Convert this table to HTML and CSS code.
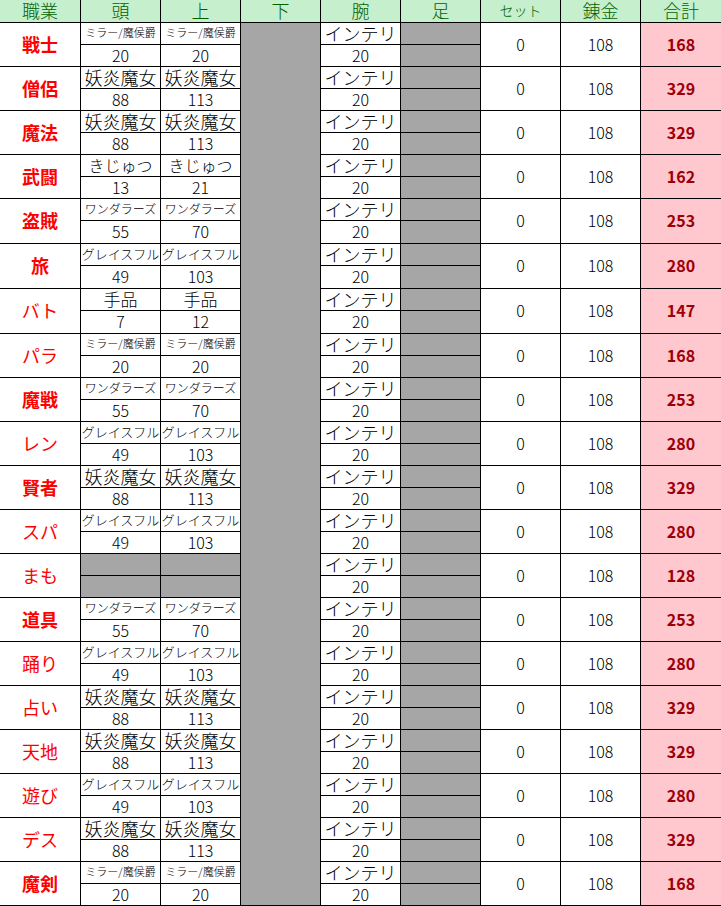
FILE: index.html
```html
<!DOCTYPE html>
<html lang="ja">
<head>
<meta charset="utf-8">
<title>職業別 装備表</title>
<link rel="stylesheet" href="styles.css">
</head>
<body>
<div class="sheet">
  <div class="hd">職業</div><div class="hd">頭</div><div class="hd">上</div><div class="hd">下</div><div class="hd">腕</div><div class="hd">足</div><div class="hd set">セット</div><div class="hd">錬金</div><div class="hd last">合計</div>
  <div class="shita"></div>

  <div class="job b">戦士</div><div class="sm">ミラー/魔侯爵</div><div class="sm">ミラー/魔侯爵</div><div>インテリ</div><div class="g"></div><div class="m">0</div><div class="m">108</div><div class="m tot">168</div>
  <div class="n">20</div><div class="n">20</div><div class="n">20</div><div class="g"></div>

  <div class="job b">僧侶</div><div>妖炎魔女</div><div>妖炎魔女</div><div>インテリ</div><div class="g"></div><div class="m">0</div><div class="m">108</div><div class="m tot">329</div>
  <div class="n">88</div><div class="n">113</div><div class="n">20</div><div class="g"></div>

  <div class="job b">魔法</div><div>妖炎魔女</div><div>妖炎魔女</div><div>インテリ</div><div class="g"></div><div class="m">0</div><div class="m">108</div><div class="m tot">329</div>
  <div class="n">88</div><div class="n">113</div><div class="n">20</div><div class="g"></div>

  <div class="job b">武闘</div><div class="kj">きじゅつ</div><div class="kj">きじゅつ</div><div>インテリ</div><div class="g"></div><div class="m">0</div><div class="m">108</div><div class="m tot">162</div>
  <div class="n">13</div><div class="n">21</div><div class="n">20</div><div class="g"></div>

  <div class="job b">盗賊</div><div class="wd">ワンダラーズ</div><div class="wd">ワンダラーズ</div><div>インテリ</div><div class="g"></div><div class="m">0</div><div class="m">108</div><div class="m tot">253</div>
  <div class="n">55</div><div class="n">70</div><div class="n">20</div><div class="g"></div>

  <div class="job b">旅</div><div class="gr">グレイスフル</div><div class="gr">グレイスフル</div><div>インテリ</div><div class="g"></div><div class="m">0</div><div class="m">108</div><div class="m tot">280</div>
  <div class="n">49</div><div class="n">103</div><div class="n">20</div><div class="g"></div>

  <div class="job">バト</div><div class="tb">手品</div><div class="tb">手品</div><div>インテリ</div><div class="g"></div><div class="m">0</div><div class="m">108</div><div class="m tot">147</div>
  <div class="n">7</div><div class="n">12</div><div class="n">20</div><div class="g"></div>

  <div class="job">パラ</div><div class="sm">ミラー/魔侯爵</div><div class="sm">ミラー/魔侯爵</div><div>インテリ</div><div class="g"></div><div class="m">0</div><div class="m">108</div><div class="m tot">168</div>
  <div class="n">20</div><div class="n">20</div><div class="n">20</div><div class="g"></div>

  <div class="job b">魔戦</div><div class="wd">ワンダラーズ</div><div class="wd">ワンダラーズ</div><div>インテリ</div><div class="g"></div><div class="m">0</div><div class="m">108</div><div class="m tot">253</div>
  <div class="n">55</div><div class="n">70</div><div class="n">20</div><div class="g"></div>

  <div class="job">レン</div><div class="gr">グレイスフル</div><div class="gr">グレイスフル</div><div>インテリ</div><div class="g"></div><div class="m">0</div><div class="m">108</div><div class="m tot">280</div>
  <div class="n">49</div><div class="n">103</div><div class="n">20</div><div class="g"></div>

  <div class="job b">賢者</div><div>妖炎魔女</div><div>妖炎魔女</div><div>インテリ</div><div class="g"></div><div class="m">0</div><div class="m">108</div><div class="m tot">329</div>
  <div class="n">88</div><div class="n">113</div><div class="n">20</div><div class="g"></div>

  <div class="job">スパ</div><div class="gr">グレイスフル</div><div class="gr">グレイスフル</div><div>インテリ</div><div class="g"></div><div class="m">0</div><div class="m">108</div><div class="m tot">280</div>
  <div class="n">49</div><div class="n">103</div><div class="n">20</div><div class="g"></div>

  <div class="job">まも</div><div class="g"></div><div class="g"></div><div>インテリ</div><div class="g"></div><div class="m">0</div><div class="m">108</div><div class="m tot">128</div>
  <div class="g"></div><div class="g"></div><div class="n">20</div><div class="g"></div>

  <div class="job b">道具</div><div class="wd">ワンダラーズ</div><div class="wd">ワンダラーズ</div><div>インテリ</div><div class="g"></div><div class="m">0</div><div class="m">108</div><div class="m tot">253</div>
  <div class="n">55</div><div class="n">70</div><div class="n">20</div><div class="g"></div>

  <div class="job">踊り</div><div class="gr">グレイスフル</div><div class="gr">グレイスフル</div><div>インテリ</div><div class="g"></div><div class="m">0</div><div class="m">108</div><div class="m tot">280</div>
  <div class="n">49</div><div class="n">103</div><div class="n">20</div><div class="g"></div>

  <div class="job">占い</div><div>妖炎魔女</div><div>妖炎魔女</div><div>インテリ</div><div class="g"></div><div class="m">0</div><div class="m">108</div><div class="m tot">329</div>
  <div class="n">88</div><div class="n">113</div><div class="n">20</div><div class="g"></div>

  <div class="job">天地</div><div>妖炎魔女</div><div>妖炎魔女</div><div>インテリ</div><div class="g"></div><div class="m">0</div><div class="m">108</div><div class="m tot">329</div>
  <div class="n">88</div><div class="n">113</div><div class="n">20</div><div class="g"></div>

  <div class="job">遊び</div><div class="gr">グレイスフル</div><div class="gr">グレイスフル</div><div>インテリ</div><div class="g"></div><div class="m">0</div><div class="m">108</div><div class="m tot">280</div>
  <div class="n">49</div><div class="n">103</div><div class="n">20</div><div class="g"></div>

  <div class="job">デス</div><div>妖炎魔女</div><div>妖炎魔女</div><div>インテリ</div><div class="g"></div><div class="m">0</div><div class="m">108</div><div class="m tot">329</div>
  <div class="n">88</div><div class="n">113</div><div class="n">20</div><div class="g"></div>

  <div class="job b">魔剣</div><div class="sm">ミラー/魔侯爵</div><div class="sm">ミラー/魔侯爵</div><div>インテリ</div><div class="g"></div><div class="m">0</div><div class="m">108</div><div class="m tot">168</div>
  <div class="n">20</div><div class="n">20</div><div class="n">20</div><div class="g"></div>
</div>
</body>
</html>
```

FILE: styles.css
```css
html, body {
  margin: 0;
  padding: 0;
  background: #ffffff;
}

.sheet {
  display: grid;
  width: 721px;
  grid-template-columns: 81px repeat(7, 80px) 80px;
  grid-template-rows: 23px repeat(8, 22px) repeat(3, 22px 23px) repeat(26, 22px);
  font-family: "Noto Sans CJK JP", "Noto Sans", sans-serif;
  color: #000;
}

.sheet > div {
  box-sizing: border-box;
  border-right: 1px solid #000;
  border-bottom: 1px solid #000;
  display: flex;
  align-items: center;
  justify-content: center;
  padding-bottom: 2px;
  white-space: nowrap;
  overflow: visible;
  font-size: 18px;
  font-weight: 300;
  line-height: 1;
  background: #fff;
}

.sheet > .hd {
  background: #c6efce;
  color: #006100;
  font-size: 18px;
}

.sheet > .hd.set {
  font-size: 14px;
}

.sheet > .hd.last,
.sheet > .tot {
  border-right: none;
}

.sheet > .shita {
  grid-column: 4;
  grid-row: 2 / span 40;
  background: #a6a6a6;
}

.sheet > .job {
  grid-row: span 2;
  color: #ff0000;
  font-size: 18px;
  font-weight: 400;
}

.sheet > .job.b {
  font-weight: 700;
}

.sheet > .sm {
  font-size: 11px;
}

.sheet > .wd {
  font-size: 12px;
}

.sheet > .gr {
  font-size: 13px;
}

.sheet > .kj {
  font-size: 16px;
}

.sheet > .tb {
  font-size: 17px;
}

.sheet > .n {
  font-size: 16px;
}

.sheet > .g {
  background: #a6a6a6;
}

.sheet > .m {
  grid-row: span 2;
  font-size: 16px;
}

.sheet > .tot {
  background: #ffc7ce;
  color: #9c0006;
  font-weight: 700;
}
```
